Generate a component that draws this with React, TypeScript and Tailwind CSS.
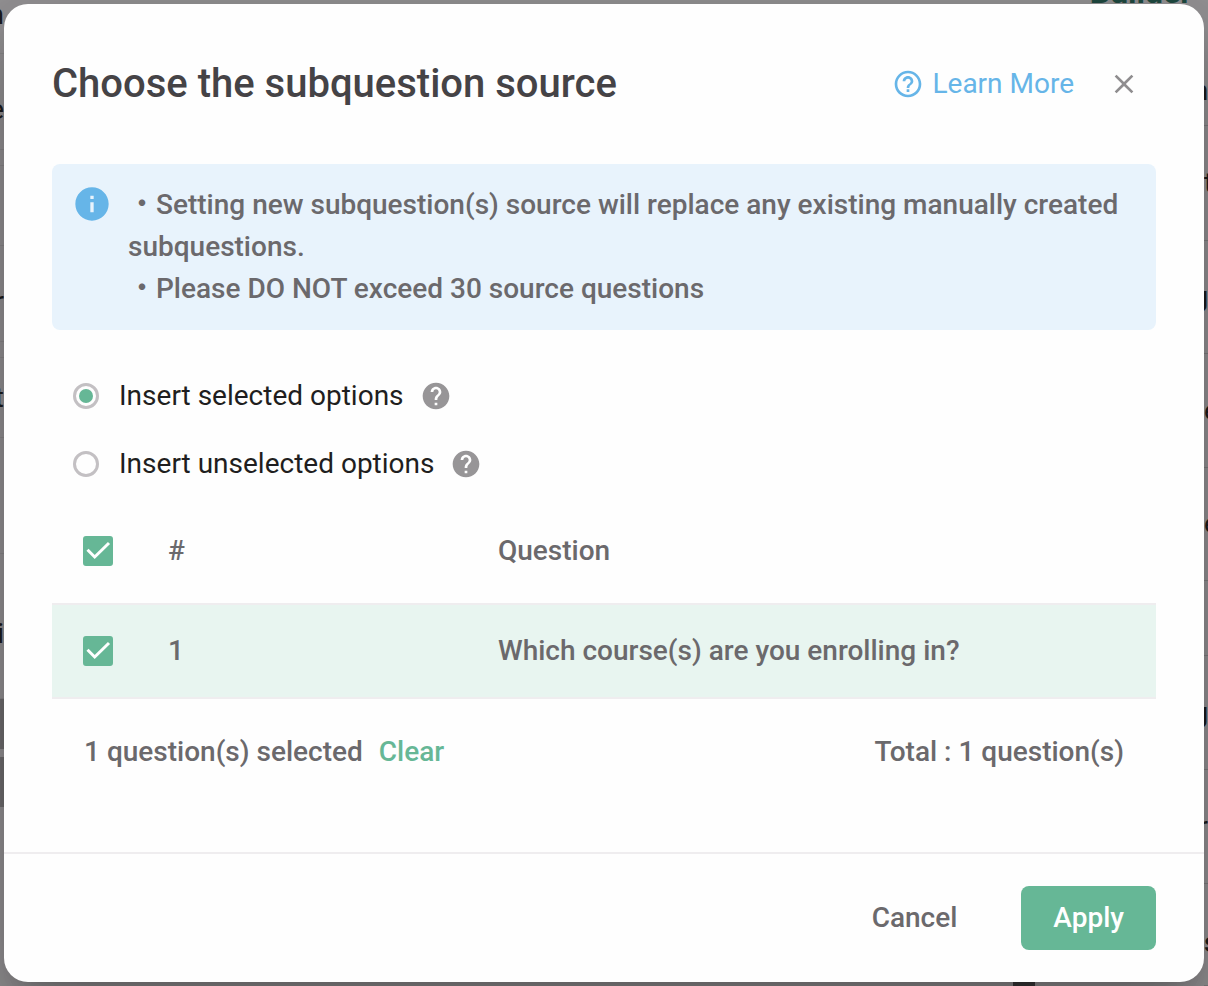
import { useState } from 'react';
import { MdClose, MdHelp, MdHelpOutline, MdInfo } from 'react-icons/md';

interface Question {
  id: number;
  title: string;
}

interface PageRow {
  text: string;
  className: string;
}

const questions: Question[] = [{ id: 1, title: 'Which course(s) are you enrolling in?' }];

const insertModes = [
  { label: 'Insert selected options', value: 'selected' },
  { label: 'Insert unselected options', value: 'unselected' },
];

const leftRows: PageRow[] = [
  { text: 'n', className: 'h-[54px] pb-6' },
  { text: 'e', className: 'h-24 pt-4' },
  { text: '', className: 'h-4' },
  { text: '', className: 'h-20' },
  { text: 'r', className: 'h-24 pt-4' },
  { text: '', className: 'h-4' },
  { text: 't', className: 'h-20' },
  { text: '', className: 'h-[116px]' },
  { text: 'i', className: 'h-[145px] pt-4' },
];

const rightRows: PageRow[] = [
  { text: 'n', className: 'h-[126px] justify-end pt-14 font-medium' },
  { text: 't', className: 'h-[115px]' },
  { text: 'g', className: 'h-[113px] justify-end font-medium' },
  { text: 'e', className: 'h-[114px]' },
  { text: 'e', className: 'h-[113px]' },
  { text: '', className: 'h-[75px]' },
  { text: 'g', className: 'h-[114px] justify-end font-medium' },
  { text: 'r', className: 'h-[114px] justify-end' },
  { text: 's', className: 'h-[102px] pt-4 font-medium' },
];

function PageBehind() {
  return (
    <div aria-hidden="true" className="absolute inset-0 flex overflow-hidden text-[28px] text-[#1c1b1c]">
      <div className="flex w-1 flex-col">
        {leftRows.map((row, i) => (
          <div key={i} className={`flex shrink-0 items-center justify-end border-b border-[#8a888a] ${row.className}`}>
            {row.text}
          </div>
        ))}
        <div className="mb-2 h-[50px] shrink-0 bg-[#706e70]" />
        <div className="h-[50px] shrink-0 bg-[#706e70]" />
      </div>
      <div className="flex flex-1 flex-col items-end justify-between">
        <div className="-mt-6 mr-3 text-[32px] font-bold leading-8 text-[#1f4a40]">Builder</div>
        <div className="mr-[169px] h-1 w-[22px] bg-[#3a393a]" />
      </div>
      <div className="flex w-1 flex-col">
        {rightRows.map((row, i) => (
          <div key={i} className={`flex shrink-0 items-center border-b border-[#7f7d7f] ${row.className}`}>
            {row.text}
          </div>
        ))}
      </div>
    </div>
  );
}

function Checkbox({ label, checked, onChange }: { label: string; checked: boolean; onChange: () => void }) {
  return (
    <label className="relative block size-[30px]">
      <input
        type="checkbox"
        aria-label={label}
        checked={checked}
        onChange={onChange}
        className="block size-[30px] appearance-none rounded-[3px] border-2 border-[#bdbbbd] checked:border-[#66b796] checked:bg-[#66b796]"
      />
      {checked && (
        <svg viewBox="0 0 30 30" fill="none" className="pointer-events-none absolute inset-0 size-[30px]">
          <path d="M4.5 13.8 11.7 21 26 7" stroke="#fff" strokeWidth="3" />
        </svg>
      )}
    </label>
  );
}

export default function App() {
  const [mode, setMode] = useState('selected');
  const [selected, setSelected] = useState<number[]>([1]);

  const allSelected = selected.length === questions.length;

  function toggle(id: number) {
    setSelected((prev) => (prev.includes(id) ? prev.filter((q) => q !== id) : [...prev, id]));
  }

  return (
    <div className="relative min-h-screen overflow-hidden bg-[#949294] font-[Roboto,'Noto_Sans_CJK_JP',sans-serif]">
      <PageBehind />

      <div className="relative flex min-h-screen p-1">
        <div
          role="dialog"
          aria-labelledby="dialog-title"
          className="flex flex-1 flex-col rounded-3xl bg-[#fefefe] text-[28px] font-medium leading-[42px] text-[#6b696c] shadow-[0_22px_30px_-14px_rgba(0,0,0,0.2),0_48px_76px_6px_rgba(0,0,0,0.14),0_18px_92px_16px_rgba(0,0,0,0.12)]"
        >
          <div className="flex items-center justify-between px-12 pb-14 pt-14">
            <h1 id="dialog-title" className="text-[40px] leading-[48px] text-[#454346]">
              Choose the subquestion source
            </h1>
            <div className="flex items-center gap-[34px] pr-4">
              <a href="#learn-more" className="flex items-center gap-2 font-normal text-[#66b5e8]">
                <MdHelpOutline className="size-8" />
                Learn More
              </a>
              <button type="button" aria-label="Close" className="text-[#8f8d8f]">
                <MdClose className="size-8" />
              </button>
            </div>
          </div>

          <div className="px-12">
            <div className="flex gap-4 rounded-lg bg-[#e8f3fc] py-5 pl-5 pr-8">
              <MdInfo className="size-10 shrink-0 text-[#66b5e8]" />
              <div>
                <p>・Setting new subquestion(s) source will replace any existing manually created subquestions.</p>
                <p>・Please DO NOT exceed 30 source questions</p>
              </div>
            </div>

            <div role="radiogroup" aria-label="Options to insert" className="mt-8">
              {insertModes.map((item) => (
                <div key={item.value} className="flex h-[68px] items-center gap-4 pl-[21px]">
                  <label className="flex items-center gap-5 font-normal text-[#1f1e20]">
                    <input
                      type="radio"
                      name="insert-mode"
                      checked={mode === item.value}
                      onChange={() => setMode(item.value)}
                      className="grid size-[26px] appearance-none place-items-center rounded-full border-[3px] border-[#c3c0c3] before:size-[14px] before:rounded-full checked:before:bg-[#66b796]"
                    />
                    {item.label}
                  </label>
                  <MdHelp className="size-8 text-[#979597]" />
                </div>
              ))}
            </div>

            <table className="w-full table-fixed border-collapse text-left">
              <thead>
                <tr className="h-[106px] border-b-2 border-[#efedef]">
                  <th className="w-[116px] pl-[31px]">
                    <Checkbox
                      label="Select all questions"
                      checked={allSelected}
                      onChange={() => setSelected(allSelected ? [] : questions.map((q) => q.id))}
                    />
                  </th>
                  <th className="w-[330px] font-medium">#</th>
                  <th className="font-medium">Question</th>
                </tr>
              </thead>
              <tbody>
                {questions.map((question) => (
                  <tr
                    key={question.id}
                    className={`h-[94px] border-b-2 border-[#efedef] ${
                      selected.includes(question.id) ? 'bg-[#e8f5f0]' : ''
                    }`}
                  >
                    <td className="pl-[31px]">
                      <Checkbox
                        label={`Select question ${question.id}`}
                        checked={selected.includes(question.id)}
                        onChange={() => toggle(question.id)}
                      />
                    </td>
                    <td>{question.id}</td>
                    <td>{question.title}</td>
                  </tr>
                ))}
              </tbody>
            </table>

            <div className="flex h-[105px] items-center justify-between px-8">
              <div className="flex gap-4">
                <span>{selected.length} question(s) selected</span>
                <button type="button" onClick={() => setSelected([])} className="text-[#66b796]">
                  Clear
                </button>
              </div>
              <span>Total : {questions.length} question(s)</span>
            </div>
          </div>

          <div className="mt-12 flex justify-end gap-8 border-t-2 border-[#efedef] px-12 py-8">
            <button type="button" className="h-16 rounded-lg px-8">
              Cancel
            </button>
            <button type="button" className="h-16 rounded-lg bg-[#66b796] px-8 text-white">
              Apply
            </button>
          </div>
        </div>
      </div>
    </div>
  );
}
